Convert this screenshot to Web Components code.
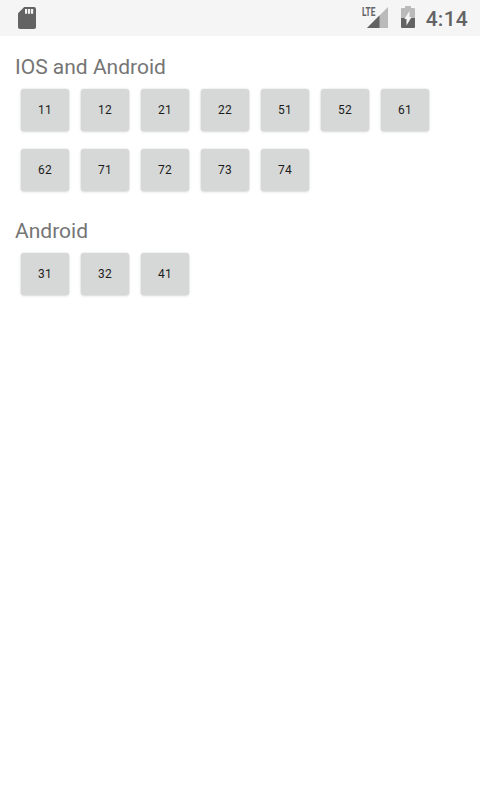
<!DOCTYPE html>
<html lang="en">
<head>
<meta charset="utf-8">
<title>Buttons</title>
<style>
html,body{margin:0;height:100%;background:#fff;overflow:hidden}
body{font-family:Roboto,sans-serif}
</style>
</head>
<body>
<app-screen></app-screen>
<script>
const define=(name,html)=>customElements.define(name,class extends HTMLElement{
  constructor(){super();this.attachShadow({mode:'open'}).innerHTML=html;}
});
define('sd-icon',`<style>:host{display:block;width:18px;height:22px}svg{display:block}</style>
<svg width="18" height="22" viewBox="0 0 18 22"><path fill="#636363" d="M6.2 0H16a2 2 0 0 1 2 2v18a2 2 0 0 1-2 2H2a2 2 0 0 1-2-2V6.2z"/><path fill="#f5f5f5" d="M7 2h2.2v4.8H7zM10 2h2.2v4.8H10zM13 2h2.2v4.8H13z"/></svg>`);
define('signal-icon',`<style>:host{display:block;width:26px;height:22px}svg{display:block}text{font:700 12px Roboto,sans-serif}</style>
<svg width="26" height="22" viewBox="0 0 26 22"><path fill="#bababa" d="M26 1V22H5z"/><path fill="#636363" d="M17.5 9.5V22H5z"/><path fill="#f5f5f5" d="M0 0H14.5V11.3H0z"/><text x="0" y="10.2" fill="#636363" textLength="13.3" lengthAdjust="spacingAndGlyphs">LTE</text></svg>`);
define('battery-icon',`<style>:host{display:block;width:14px;height:22px}svg{display:block}</style>
<svg width="14" height="22" viewBox="0 0 14 22"><path fill="#bababa" d="M4 0h6v2h3a1 1 0 0 1 1 1v9H0V3a1 1 0 0 1 1-1h3z"/><path fill="#636363" d="M0 12h14v9a1 1 0 0 1-1 1H1a1 1 0 0 1-1-1z"/><path fill="#f5f5f5" d="M8.5 5V11H10.6L5.5 19.5V13H3.4z"/></svg>`);
define('status-bar',`<style>
:host{display:flex;height:36px;box-sizing:border-box;padding:0 12px 0 18px;background:#f5f5f5;align-items:center;color:#636363}
.gap{flex:1}signal-icon{margin:0 13px 2px 0}battery-icon{margin:0 11px 2px 0}
.time{font-size:21px;font-weight:500;line-height:24px;padding-top:2px;letter-spacing:.25px}
</style><sd-icon></sd-icon><span class="gap"></span><signal-icon></signal-icon><battery-icon></battery-icon><span class="time"><slot></slot></span>`);
define('raised-button',`<style>
:host{display:flex;width:48px;height:42px;align-items:center;justify-content:center;border-radius:3px;background:#d6d8d7;color:#1c1c1c;font-size:12px;font-weight:400;line-height:14px;letter-spacing:.3px;box-shadow:0 0 2px rgba(0,0,0,.14),0 1px 3px rgba(0,0,0,.13)}
</style><slot></slot>`);
define('button-section',`<style>
:host{display:block}
h2{margin:0 0 0 15px;font-size:21px;font-weight:400;line-height:25px;color:#757575}
.grid{display:grid;grid-template-columns:repeat(7,48px);gap:18px 12px;padding:9px 0 0 21px}
</style><h2><slot name="title"></slot></h2><div class="grid"><slot></slot></div>`);
const section=(title,ids)=>`<button-section><span slot="title">${title}</span>${ids.map(n=>`<raised-button>${n}</raised-button>`).join('')}</button-section>`;
define('app-screen',`<style>
:host{display:block;width:480px;height:800px;background:#fff}
main{display:flex;flex-direction:column;gap:28px;padding-top:19px}
</style><status-bar>4:14</status-bar><main>${section('IOS and Android',[11,12,21,22,51,52,61,62,71,72,73,74])}${section('Android',[31,32,41])}</main>`);
</script>
</body>
</html>
